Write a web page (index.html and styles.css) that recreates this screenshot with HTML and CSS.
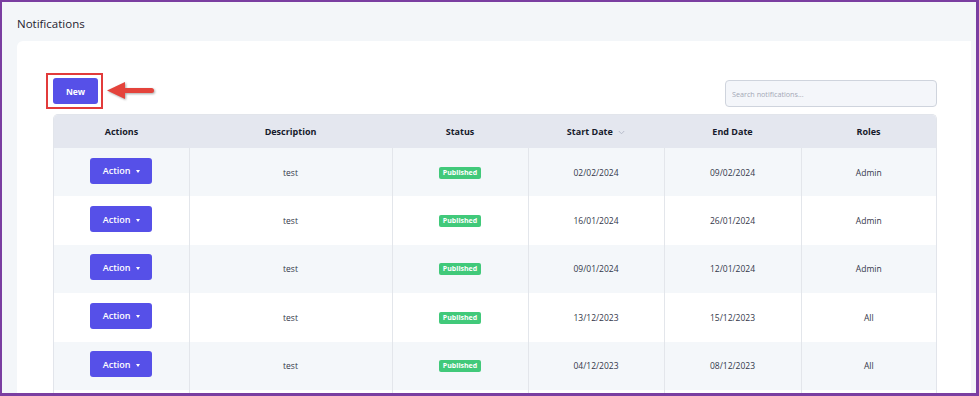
FILE: index.html
```
<!DOCTYPE html>
<html lang="en">

<head>
    <meta charset="UTF-8">
    <meta name="viewport" content="width=device-width, initial-scale=1.0">
    <title>Notifications</title>
    <link rel="stylesheet" href="styles.css">
</head>

<body>
    <div class="frame">
        <h1 class="page-title">Notifications</h1>
        <div class="card">
            <div class="toolbar">
                <div class="new-wrap">
                    <button class="btn-new">New</button>
                    <svg class="callout-arrow" width="50" height="20" viewBox="0 0 50 20">
                        <polygon points="1,9.5 19,1 19,18" fill="#e4433b" />
                        <rect x="17" y="7" width="31" height="5" rx="2.5" fill="#e4433b" />
                    </svg>
                </div>
                <input class="search" type="text" placeholder="Search notifications...">
            </div>

            <div class="table-wrap">
                <table class="grid">
                    <colgroup>
                        <col style="width: 135px">
                        <col style="width: 203px">
                        <col style="width: 136px">
                        <col style="width: 136px">
                        <col style="width: 137px">
                        <col>
                    </colgroup>
                    <thead>
                        <tr>
                            <th>Actions</th>
                            <th>Description</th>
                            <th>Status</th>
                            <th>Start Date
                                <svg class="sort" width="7" height="5" viewBox="0 0 7 5">
                                    <path d="M0.8 1 L3.5 3.8 L6.2 1" fill="none" stroke="#b3b8c6" stroke-width="0.9" />
                                </svg>
                            </th>
                            <th>End Date</th>
                            <th>Roles</th>
                        </tr>
                    </thead>
                    <tbody>
                        <tr>
                            <td><button class="btn-action">Action <span class="caret"></span></button></td>
                            <td>test</td>
                            <td><span class="badge">Published</span></td>
                            <td>02/02/2024</td>
                            <td>09/02/2024</td>
                            <td>Admin</td>
                        </tr>
                        <tr>
                            <td><button class="btn-action">Action <span class="caret"></span></button></td>
                            <td>test</td>
                            <td><span class="badge">Published</span></td>
                            <td>16/01/2024</td>
                            <td>26/01/2024</td>
                            <td>Admin</td>
                        </tr>
                        <tr>
                            <td><button class="btn-action">Action <span class="caret"></span></button></td>
                            <td>test</td>
                            <td><span class="badge">Published</span></td>
                            <td>09/01/2024</td>
                            <td>12/01/2024</td>
                            <td>Admin</td>
                        </tr>
                        <tr>
                            <td><button class="btn-action">Action <span class="caret"></span></button></td>
                            <td>test</td>
                            <td><span class="badge">Published</span></td>
                            <td>13/12/2023</td>
                            <td>15/12/2023</td>
                            <td>All</td>
                        </tr>
                        <tr>
                            <td><button class="btn-action">Action <span class="caret"></span></button></td>
                            <td>test</td>
                            <td><span class="badge">Published</span></td>
                            <td>04/12/2023</td>
                            <td>08/12/2023</td>
                            <td>All</td>
                        </tr>
                        <!-- next row only peeks in at the bottom edge -->
                        <tr>
                            <td></td>
                            <td></td>
                            <td></td>
                            <td></td>
                            <td></td>
                            <td></td>
                        </tr>
                    </tbody>
                </table>
            </div>
        </div>
    </div>
</body>

</html>
```

FILE: styles.css
```
body {
    margin: 0;
    padding: 0;
    font-family: "Open Sans", "Noto Sans", sans-serif;
    color: #33374a;
}

.frame {
    box-sizing: border-box;
    height: 396px;
    overflow: hidden;
    background-color: #f3f6f9;
    border: solid #7a3ea1;
    border-width: 2px 3px 3px 2px;
    padding: 14px 5px 0 15px;
}

.page-title {
    margin: 0 0 9px 0;
    font-size: 11.5px;
    line-height: 16px;
    font-weight: 500;
    color: #1f2330;
}

.card {
    background-color: white;
    border-radius: 6px 0 0 0;
    padding: 37px 34px 0 36px;
    height: 400px;
}

.toolbar {
    display: flex;
    justify-content: space-between;
    align-items: flex-start;
}

.new-wrap {
    position: relative;
}

/* red highlight box drawn around the New button */
.new-wrap::after {
    content: "";
    position: absolute;
    left: -7px;
    top: -5px;
    right: -5px;
    bottom: -5px;
    border: 2px solid #e23b3b;
    pointer-events: none;
}

.btn-new {
    display: block;
    width: 45px;
    height: 26px;
    border: none;
    border-radius: 3px;
    background-color: #5650e8;
    color: white;
    font-family: inherit;
    font-size: 8.5px;
    font-weight: 700;
    cursor: pointer;
}

.callout-arrow {
    position: absolute;
    left: 53px;
    top: 3px;
    filter: drop-shadow(1px 1px 1px rgba(0, 0, 0, 0.35));
}

.search {
    box-sizing: border-box;
    width: 212px;
    height: 27px;
    margin-top: 2px;
    padding: 0 6px;
    border: 1px solid #cfd4dd;
    border-radius: 4px;
    background-color: #f4f6fa;
    font-family: inherit;
    font-size: 7.2px;
}

.search::placeholder {
    color: #a3a8b6;
}

.table-wrap {
    margin-top: 7px;
    border: 1px solid #e2e5eb;
    border-bottom: none;
    border-radius: 5px 5px 0 0;
    overflow: hidden;
}

.grid {
    width: 100%;
    table-layout: fixed;
    border-collapse: collapse;
}

.grid th {
    height: 33px;
    padding: 0;
    background-color: #e4e7ef;
    font-size: 9px;
    font-weight: 700;
    color: #161a2b;
    text-align: center;
}

.grid th .sort {
    margin-left: 3px;
    vertical-align: middle;
}

.grid td {
    height: 48.4px;
    padding: 0;
    text-align: center;
    font-size: 8.5px;
    font-weight: 500;
    border-left: 1px solid #e3e6eb;
}

.grid td:first-child {
    border-left: none;
}

.grid tbody tr:nth-child(odd) {
    background-color: #f4f7fa;
}

.grid tbody tr:nth-child(even) {
    background-color: white;
}

.btn-action {
    width: 62px;
    height: 26px;
    margin-top: -3px;
    border: none;
    border-radius: 3px;
    background-color: #5650e8;
    color: white;
    font-family: inherit;
    font-size: 9px;
    font-weight: 600;
    cursor: pointer;
}

.caret {
    display: inline-block;
    margin-left: 3px;
    vertical-align: middle;
    border-top: 3px solid white;
    border-left: 2.5px solid transparent;
    border-right: 2.5px solid transparent;
}

.badge {
    display: inline-block;
    height: 12px;
    padding: 0 4px;
    border-radius: 2px;
    background-color: #41c97a;
    color: white;
    font-size: 7px;
    font-weight: 700;
    line-height: 12px;
}
```
